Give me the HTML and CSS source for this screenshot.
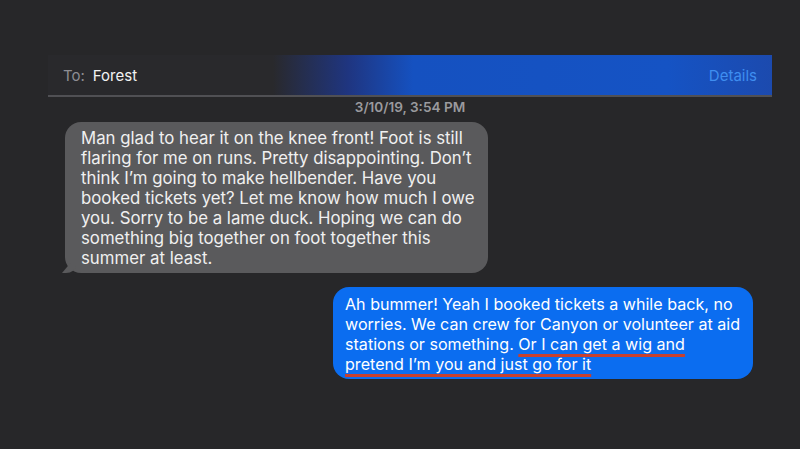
FILE: index.html
```html
<!DOCTYPE html>
<html>
<head>
<meta charset="utf-8">
<link rel="stylesheet" href="styles.css">
</head>
<body>
<div class="screen">
  <div class="header">
    <div class="to"><span class="to-label">To:</span><span class="to-name">Forest</span></div>
    <div class="details">Details</div>
  </div>
  <div class="stamp">3/10/19, 3:54 PM</div>
  <div class="bubble in">Man glad to hear it on the knee front! Foot is still flaring for me on runs. Pretty disappointing. Don’t think I’m going to make hellbender. Have you booked tickets yet? Let me know how much I owe you. Sorry to be a lame duck. Hoping we can do something big together on foot together this summer at least.</div>
  <div class="bubble out">Ah bummer! Yeah I booked tickets a while back, no worries. We can crew for Canyon or volunteer at aid stations or something. <span class="mark">Or I can get a wig and pretend I’m you and just go for it</span></div>
</div>
</body>
</html>
```
FILE: styles.css
```css
html, body {
  margin: 0;
  padding: 0;
  background: #272729;
  height: 100%;
}
body {
  font-family: Inter, "Liberation Sans", Arial, sans-serif;
}
.screen {
  width: 724px;
  margin-left: 48px;
  padding-top: 55px;
  display: flex;
  flex-direction: column;
}
.header {
  height: 40px;
  border-bottom: 2px solid #505054;
  background: linear-gradient(90deg, #29292c 0, #29292c 225px, #1f3580 300px, #1551c0 365px, #1553c4 620px, #1c4aae 724px);
  display: flex;
  align-items: center;
  justify-content: space-between;
  padding: 0 15px;
  font-size: 15px;
}
.to-label {
  color: #8e8e93;
  margin-right: 8px;
}
.to-name {
  color: #f2f2f2;
}
.details {
  color: #3f8ef0;
}
.stamp {
  text-align: center;
  color: #9a9a9e;
  font-size: 13.6px;
  font-weight: 600;
  margin-top: 2px;
  height: 23px;
  line-height: 16px;
}
.bubble {
  line-height: 20px;
  border-radius: 16px;
  position: relative;
}
.bubble.in {
  font-size: 16.8px;
  background: #5a5a5c;
  color: #f0f0f0;
  width: 396px;
  margin-left: 17px;
  padding: 6px 11px 5px 16px;
}
.bubble.in::after {
  content: "";
  position: absolute;
  left: -3px;
  bottom: 0;
  width: 14px;
  height: 10px;
  background: #5a5a5c;
  border-bottom-right-radius: 10px 8px;
  clip-path: polygon(0 100%, 60% 0, 100% 0, 100% 100%);
}
.bubble.out {
  font-size: 16.1px;
  background: #0b6df0;
  color: #ffffff;
  width: 397px;
  align-self: flex-end;
  margin-right: 19px;
  margin-top: 14px;
  padding: 7px 11px 5px 12px;
}
.mark {
  text-decoration: underline;
  text-decoration-color: #c8402e;
  text-decoration-thickness: 3px;
  text-underline-offset: 4px;
}
```
